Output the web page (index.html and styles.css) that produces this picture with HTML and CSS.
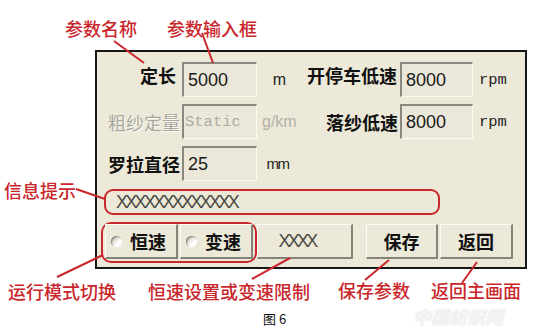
FILE: index.html
```html
<!DOCTYPE html>
<html lang="zh-CN">

<head>
    <meta charset="UTF-8">
    <title>参数设置</title>
    <link rel="stylesheet" href="styles.css">
</head>

<body>
    <div class="figure">
        <div class="panel">
            <div class="fields">
                <span class="label first">定长</span>
                <div class="input">5000</div>
                <span class="unit">m</span>
                <span class="label first">开停车低速</span>
                <div class="input">8000</div>
                <span class="unit rpm">rpm</span>

                <span class="label disabled">粗纱定量</span>
                <div class="input static">Static</div>
                <span class="unit disabled">g/km</span>
                <span class="label">落纱低速</span>
                <div class="input">8000</div>
                <span class="unit rpm">rpm</span>

                <span class="label">罗拉直径</span>
                <div class="input">25</div>
                <span class="unit small">mm</span>
            </div>

            <div class="info">XXXXXXXXXXXXX</div>

            <div class="controls">
                <div class="mode">
                    <button class="btn radio"><i class="dot"></i>恒速</button>
                    <button class="btn radio"><i class="dot"></i>变速</button>
                </div>
                <button class="btn limit">XXXX</button>
                <button class="btn save">保存</button>
                <button class="btn back">返回</button>
            </div>
        </div>

        <svg class="lines" width="549" height="333">
            <line x1="114" y1="41" x2="144" y2="63" />
            <line x1="202" y1="33" x2="213" y2="63" />
            <line x1="76" y1="189" x2="105" y2="199" />
            <line x1="57" y1="277" x2="103" y2="255" />
            <line x1="252" y1="279" x2="290" y2="258" />
            <line x1="365" y1="280" x2="389" y2="260" />
            <line x1="462" y1="283" x2="477" y2="262" />
        </svg>

        <span class="note" style="left:65px;top:18px">参数名称</span>
        <span class="note" style="left:167px;top:18px">参数输入框</span>
        <span class="note" style="left:4px;top:180px">信息提示</span>
        <span class="note" style="left:8px;top:281px">运行模式切换</span>
        <span class="note" style="left:148px;top:281px">恒速设置或变速限制</span>
        <span class="note" style="left:338px;top:280px">保存参数</span>
        <span class="note" style="left:431px;top:280px">返回主画面</span>

        <span class="caption">图 6</span>
        <span class="watermark">中国纺织网</span>
    </div>
</body>

</html>
```

FILE: styles.css
```css
body {
    margin: 0;
    background-color: white;
}
.figure {
    position: relative;
    width: 549px;
    height: 333px;
    padding: 50px 0 0 95px;
    box-sizing: border-box;
    overflow: hidden;
}
.panel {
    width: 432px;
    height: 219px;
    box-sizing: border-box;
    border: 2px solid #161616;
    background-color: #ece9d8;
}
.fields {
    display: grid;
    grid-template-columns: 85px 75px 45px 98px 73px 1fr;
    grid-auto-rows: 35px;
    row-gap: 7px;
    padding-top: 10px;
    align-items: center;
}
.label {
    text-align: right;
    padding-right: 2px;
    font-family: "Noto Sans CJK SC", sans-serif;
    font-weight: bold;
    font-size: 18px;
    line-height: 20px;
    color: #111;
}
.label.first {
    margin-bottom: 10px;
    padding-right: 3px;
}
.fields .label.first:first-child {
    padding-right: 6px;
}
.label.disabled {
    color: #a9a79c;
    font-weight: normal;
    text-shadow: 1px 1px 0 #fbfaf4;
}
.input {
    height: 35px;
    box-sizing: border-box;
    border-top: 2px solid #8b897f;
    border-left: 2px solid #8b897f;
    border-right: 1px solid #fbfaf3;
    border-bottom: 1px solid #fbfaf3;
    background-color: #ebe8da;
    padding-left: 4px;
    font-family: "Liberation Sans", Arial, sans-serif;
    font-size: 18px;
    line-height: 32px;
    color: #1a1a1a;
}
.input.static {
    font-family: "Liberation Mono", monospace;
    font-size: 15.5px;
    color: #aeaca2;
    padding-left: 1px;
}
.unit {
    text-align: center;
    font-family: "Liberation Sans", Arial, sans-serif;
    font-size: 16px;
    color: #222;
}
.unit.disabled {
    color: #b3b1a6;
    text-align: left;
    padding-left: 5px;
}
.unit.small {
    font-size: 15px;
    letter-spacing: -1.5px;
    padding-right: 4px;
}
.unit.rpm {
    text-align: left;
    padding-left: 6px;
    font-family: "Liberation Mono", monospace;
    font-size: 15.5px;
}
.info {
    width: 336px;
    height: 26px;
    box-sizing: border-box;
    margin: 8px 0 0 7px;
    border: 2px solid #c9272c;
    border-radius: 9px;
    padding-left: 10px;
    font-family: "Liberation Sans", Arial, sans-serif;
    font-size: 18px;
    font-weight: 300;
    letter-spacing: -2.7px;
    line-height: 22px;
    color: #4a4a44;
}
.controls {
    display: flex;
    align-items: flex-start;
    margin: 7px 0 0 4px;
}
.mode {
    display: flex;
    gap: 2px;
    width: 156px;
    height: 41px;
    box-sizing: border-box;
    padding: 0 2px;
    border: 2px solid #c9272c;
    border-radius: 10px;
}
.btn {
    height: 35px;
    box-sizing: border-box;
    border-top: 1px solid #fdfdf8;
    border-left: 1px solid #fdfdf8;
    border-right: 2px solid #85837a;
    border-bottom: 2px solid #85837a;
    background-color: #ece9d8;
    padding: 0;
    font-family: "Noto Sans CJK SC", sans-serif;
    font-weight: bold;
    font-size: 18px;
    color: #111;
}
.btn.radio {
    width: 73px;
    display: flex;
    align-items: center;
    gap: 8px;
    padding-left: 5px;
}
.dot {
    width: 11px;
    height: 11px;
    border-radius: 50%;
    background: linear-gradient(135deg, #a3a199 0%, #e6e4da 40%, #ffffff 65%);
    box-shadow: inset 1px 1px 1px #8a887f;
}
.btn.limit {
    width: 96px;
    margin-top: 2px;
    padding-right: 15px;
    font-family: "Liberation Sans", Arial, sans-serif;
    font-weight: 300;
    font-size: 18px;
    letter-spacing: -2.7px;
    color: #4a4a44;
}
.btn.save {
    width: 72px;
    margin: 2px 0 0 13px;
}
.btn.back {
    width: 73px;
    margin: 2px 0 0 2px;
}
.lines {
    position: absolute;
    left: 0;
    top: 0;
}
.lines line {
    stroke: #c9272c;
    stroke-width: 2;
}
.note {
    position: absolute;
    font-family: "Noto Sans CJK SC", sans-serif;
    font-weight: 500;
    font-size: 18px;
    line-height: 20px;
    color: #c9272c;
    white-space: nowrap;
}
.caption {
    position: absolute;
    left: 263px;
    top: 311px;
    font-family: "Noto Sans CJK SC", sans-serif;
    font-size: 13px;
    line-height: 16px;
    color: #111;
}
.watermark {
    position: absolute;
    left: 413px;
    top: 306px;
    font-family: "Noto Sans CJK SC", sans-serif;
    font-weight: bold;
    font-style: italic;
    font-size: 18px;
    line-height: 20px;
    color: #f2f2f2;
    text-shadow: 0 0 2px #e4e4e4;
}
```
